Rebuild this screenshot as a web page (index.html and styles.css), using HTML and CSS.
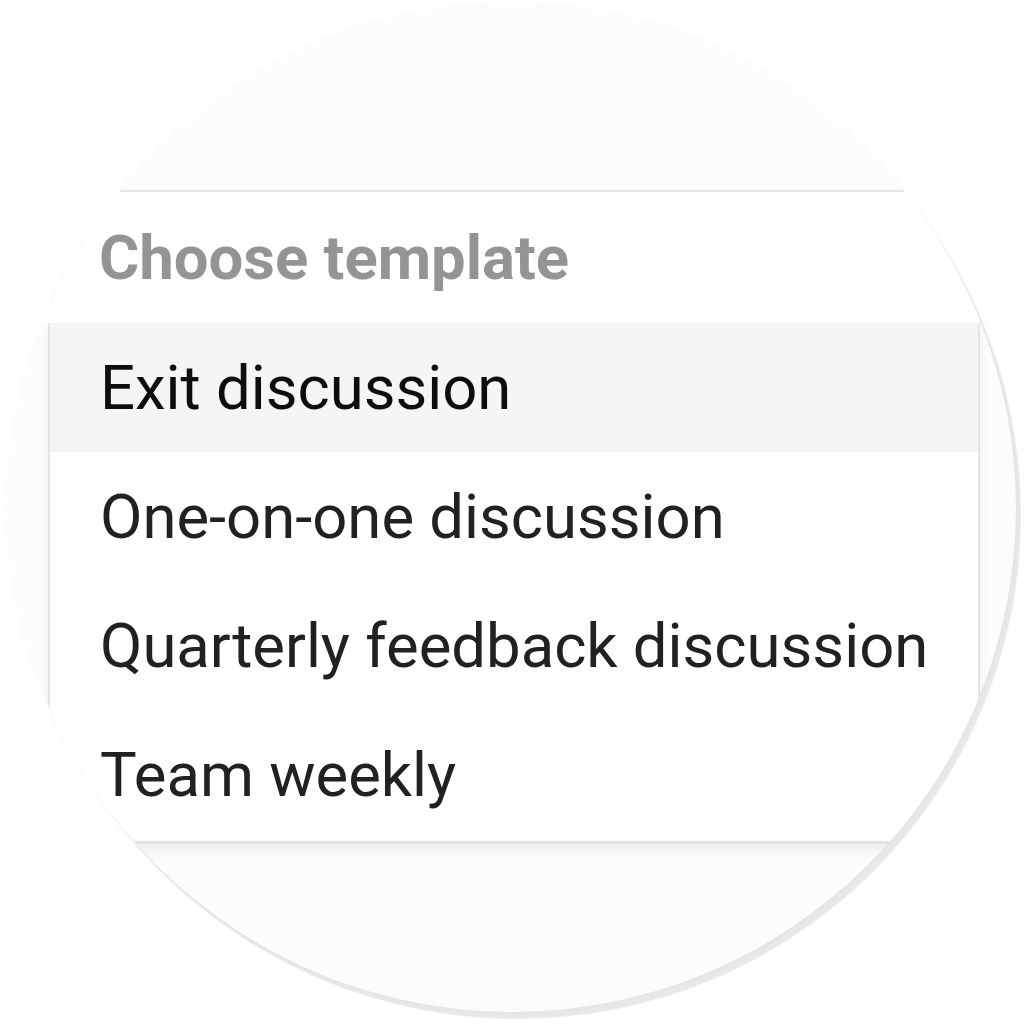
FILE: index.html
```html
<!DOCTYPE html>
<html lang="en">
<head>
<meta charset="utf-8">
<title>Choose template</title>
<link rel="stylesheet" href="styles.css">
</head>
<body>
<div class="lens">
  <div class="backdrop-top"></div>
  <div class="header"><span class="header-title">Choose template</span></div>
  <ul class="menu">
    <li class="item active">Exit discussion</li>
    <li class="item">One-on-one discussion</li>
    <li class="item">Quarterly feedback discussion</li>
    <li class="item">Team weekly</li>
  </ul>
</div>
</body>
</html>
```
FILE: styles.css
```css
html, body {
  margin: 0;
  padding: 0;
  background: #ffffff;
}
body {
  width: 1024px;
  height: 1026px;
  overflow: hidden;
  font-family: Roboto, "Noto Sans", "Liberation Sans", sans-serif;
}
.lens {
  width: 1008px;
  height: 1008px;
  margin: 4px 0 0 8px;
  border-radius: 50%;
  overflow: hidden;
  background: #fdfbfc;
  box-shadow: 5px 7px 1px rgba(0, 0, 0, 0.09), 0 0 6px rgba(0, 0, 0, 0.035);
  display: flex;
  flex-direction: column;
}
.backdrop-top {
  height: 186px;
  flex: none;
}
.header {
  flex: none;
  height: 131px;
  border-top: 2px solid #e3e3e3;
  background: #ffffff;
  display: flex;
  align-items: center;
  padding-left: 91px;
}
.header-title {
  font-size: 61.6px;
  font-weight: 700;
  color: #949494;
}
.menu {
  list-style: none;
  margin: 0 0 0 40px;
  padding: 0 0 2px 0;
  width: 932px;
  box-sizing: border-box;
  background: #ffffff;
  border-left: 2px solid #e4e4e4;
  border-right: 2px solid #e4e4e4;
  border-bottom: 3px solid #e2e2e2;
  box-shadow: 0 8px 12px rgba(0, 0, 0, 0.05);
  flex: none;
}
.item {
  height: 129px;
  display: flex;
  align-items: center;
  padding-left: 50px;
  font-size: 61.6px;
  font-weight: 400;
  color: #212121;
}
.item.active {
  background: #f5f5f5;
  color: #0d0d0d;
}
```
